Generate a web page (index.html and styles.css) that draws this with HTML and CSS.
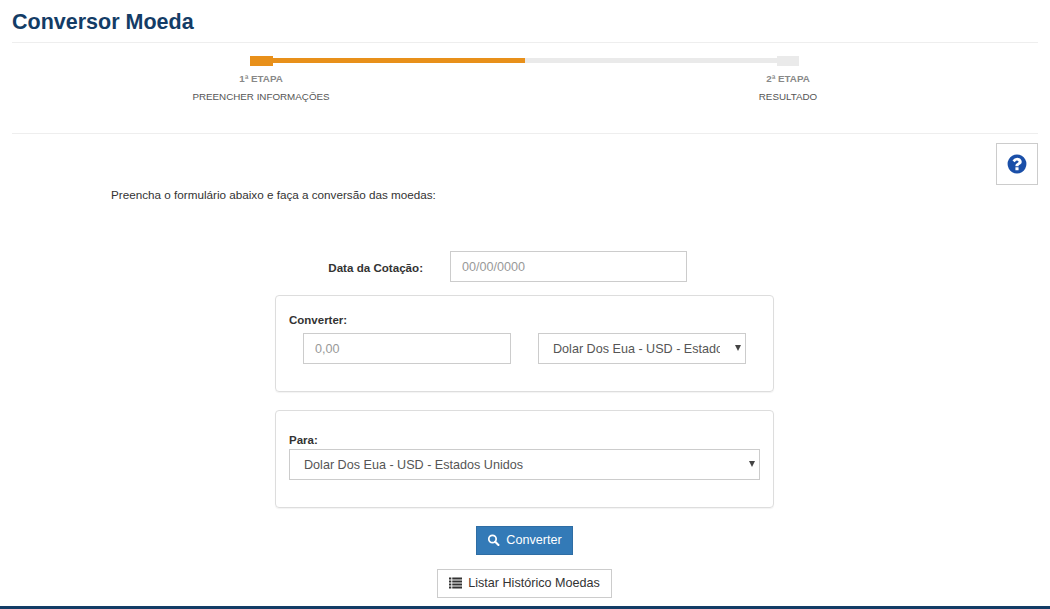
FILE: index.html
```html
<!DOCTYPE html>
<html lang="pt-BR">
  <head>
    <meta charset="UTF-8"/>
    <title>Conversor Moeda</title>
    <link rel="stylesheet" href="styles.css">
  </head>
  <body>
    <main class="page">
      <h1 class="page_title">Conversor Moeda</h1>

      <div class="steps">
        <div class="steps_track">
          <span class="steps_dot steps_dot_active"></span>
          <span class="steps_bar steps_bar_active"></span>
          <span class="steps_bar"></span>
          <span class="steps_dot steps_dot_last"></span>
        </div>
        <div class="steps_labels">
          <div class="steps_label">
            <p class="steps_number">1ª ETAPA</p>
            <p class="steps_name">PREENCHER INFORMAÇÕES</p>
          </div>
          <div class="steps_label">
            <p class="steps_number">2ª ETAPA</p>
            <p class="steps_name">RESULTADO</p>
          </div>
        </div>
      </div>

      <div class="helpRow">
        <button class="helpButton" title="Ajuda">
          <svg class="helpButton_icon" viewBox="0 0 1792 1792"><path fill="#1a4fa8" d="M1024 1376v-192q0-14-9-23t-23-9H800q-14 0-23 9t-9 23v192q0 14 9 23t23 9h192q14 0 23-9t9-23zm256-672q0-88-55.500-163T1086 425t-170-41q-243 0-371 213-15 24 8 42l132 100q7 6 19 6 16 0 25-12 53-68 86-92 34-24 86-24 48 0 85.500 26t37.500 59q0 38-20 61t-68 45q-63 28-115.500 86.500T768 1020v36q0 14 9 23t23 9h192q14 0 23-9t9-23q0-19 21.500-49.500T1100 957q32-18 49-28.500t46-35 44.500-48 28-60.500 12.500-81zm384 192q0 209-103 385.500T1281.500 1561 896 1664t-385.500-103T231 1281.500 128 896t103-385.500T510.500 231 896 128t385.500 103T1561 510.500 1664 896z"/></svg>
        </button>
      </div>

      <p class="intro">Preencha o formulário abaixo e faça a conversão das moedas:</p>

      <form class="form">
        <div class="dateRow">
          <label class="dateRow_label" for="dataCotacao">Data da Cotação:</label>
          <input class="field dateRow_input" id="dataCotacao" type="text" placeholder="00/00/0000">
        </div>

        <section class="panel">
          <label class="panel_label" for="valor">Converter:</label>
          <div class="panel_row">
            <input class="field panel_half" id="valor" type="text" placeholder="0,00">
            <div class="selectBox panel_half">
              <select class="field">
                <option>Dolar Dos Eua - USD - Estados Unidos</option>
              </select>
            </div>
          </div>
        </section>

        <section class="panel panel_para">
          <label class="panel_label" for="para">Para:</label>
          <div class="selectBox panel_full">
            <select class="field" id="para">
              <option>Dolar Dos Eua - USD - Estados Unidos</option>
            </select>
          </div>
        </section>

        <button class="btn btn_primary" type="button">
          <svg class="btn_icon" viewBox="0 0 14 14"><circle cx="5.800" cy="5.800" r="4.300" fill="none" stroke="#fff" stroke-width="2"/><path d="M9 9l3.800 3.800" stroke="#fff" stroke-width="2.400" stroke-linecap="round"/></svg>
          Converter
        </button>
        <button class="btn btn_default" type="button">
          <svg class="btn_icon" viewBox="0 0 14 12"><path fill="#333" d="M0 0h2.500v2.200H0zM3.500 0H14v2.200H3.500zM0 3.200h2.500v2.200H0zM3.500 3.200H14v2.200H3.500zM0 6.500h2.500v2.200H0zM3.500 6.500H14v2.200H3.500zM0 9.700h2.500v2.200H0zM3.500 9.700H14v2.200H3.500z"/></svg>
          Listar Histórico Moedas
        </button>
      </form>
    </main>
    <div class="bottomLine"></div>
  </body>
</html>
```
FILE: styles.css
```css
* {
  box-sizing: border-box;
}

body {
  margin: 0;
  height: 609px;
  overflow: hidden;
  background-color: #fff;
  font-family: "Liberation Sans", Arial, sans-serif;
  font-size: 12px;
  color: #333;
}

p {
  margin: 0;
}

.page {
  height: 606px;
  padding: 0 12px;
}

.page_title {
  margin: 0;
  height: 43px;
  padding-top: 9px;
  border-bottom: 1px solid #eee;
  font-size: 21.500px;
  line-height: 26px;
  font-weight: bold;
  color: #133c66;
}

.steps {
  height: 91px;
  padding-top: 13px;
  border-bottom: 1px solid #eee;
}
  .steps_track {
    display: flex;
    align-items: flex-start;
    width: 549px;
    height: 10px;
    margin-left: 238px;
  }
  .steps_dot {
    width: 23px;
    height: 10px;
    background-color: #eaeaea;
  }
  .steps_dot_active {
    background-color: #e8901a;
  }
  .steps_dot_last {
    width: 22px;
  }
  .steps_bar {
    flex: 1;
    height: 5px;
    margin-top: 2px;
    background-color: #eaeaea;
  }
  .steps_bar_active {
    background-color: #e8901a;
  }
  .steps_labels {
    display: flex;
    gap: 327px;
    margin-left: 149px;
    margin-top: 7px;
  }
  .steps_label {
    width: 200px;
    text-align: center;
  }
  .steps_number {
    font-size: 9.800px;
    line-height: 12px;
    font-weight: bold;
    color: #888;
  }
  .steps_name {
    margin-top: 6px;
    font-size: 9.800px;
    line-height: 12px;
    color: #555;
  }

.helpRow {
  display: flex;
  justify-content: flex-end;
  padding-top: 9px;
}
  .helpButton {
    display: flex;
    align-items: center;
    justify-content: center;
    width: 42px;
    height: 42px;
    padding: 0;
    background-color: #fff;
    border: 1px solid #ccc;
  }
  .helpButton_icon {
    width: 22px;
    height: 22px;
  }

.intro {
  margin-top: 3px;
  margin-left: 99px;
  font-size: 11.700px;
  line-height: 14px;
}

.form {
  display: flex;
  flex-direction: column;
  align-items: center;
  width: 499px;
  margin: 49px 0 0 263px;
}

.field {
  height: 31px;
  padding: 0 11px;
  background-color: #fff;
  border: 1px solid #ccc;
  border-radius: 0;
  font-family: inherit;
  font-size: 12.600px;
  color: #555;
}
.field::placeholder {
  color: #999;
}

/* arrow drawn here so it stays the small old-style triangle */
.selectBox {
  position: relative;
}
.selectBox select {
  display: block;
  width: 100%;
  padding: 0 25px 0 14px;
  appearance: none;
}
.selectBox::after {
  content: "";
  position: absolute;
  top: 12px;
  right: 5px;
  border-left: 3px solid transparent;
  border-right: 3px solid transparent;
  border-top: 6px solid #444;
  pointer-events: none;
}

.dateRow {
  display: flex;
  align-items: center;
  align-self: flex-start;
  height: 31px;
}
  .dateRow_label {
    width: 148px;
    padding-top: 1px;
    text-align: right;
    font-size: 11.600px;
    font-weight: bold;
  }
  .dateRow_input {
    width: 237px;
    margin-left: 27px;
  }

.panel {
  width: 499px;
  height: 97px;
  margin-top: 13px;
  padding: 18px 13px 0 13px;
  border: 1px solid #ddd;
  border-radius: 4px;
  box-shadow: 0 1px 1px rgba(0, 0, 0, 0.05);
}
.panel_para {
  height: 98px;
  margin-top: 18px;
  padding-top: 23px;
}
  .panel_label {
    display: block;
    height: 15px;
    font-size: 11.500px;
    line-height: 13px;
    font-weight: bold;
  }
  .panel_row {
    display: flex;
    gap: 27px;
    padding-left: 14px;
    margin-top: 4px;
  }
  .panel_half {
    width: 208px;
  }
  .panel_full {
    width: 471px;
  }

.btn {
  display: flex;
  align-items: center;
  justify-content: center;
  gap: 6px;
  font-family: inherit;
  font-size: 12.600px;
  padding: 0 0 2px 0;
}
  .btn_icon {
    width: 13px;
    height: 12px;
  }
.btn_primary {
  width: 97px;
  height: 29px;
  margin-top: 18px;
  background-color: #337ab7;
  border: 1px solid #2e6da4;
  color: #fff;
}
.btn_default {
  width: 175px;
  height: 29px;
  margin-top: 14px;
  background-color: #fff;
  border: 1px solid #ccc;
  color: #333;
}

.bottomLine {
  height: 3px;
  background-color: #133c66;
}
```
